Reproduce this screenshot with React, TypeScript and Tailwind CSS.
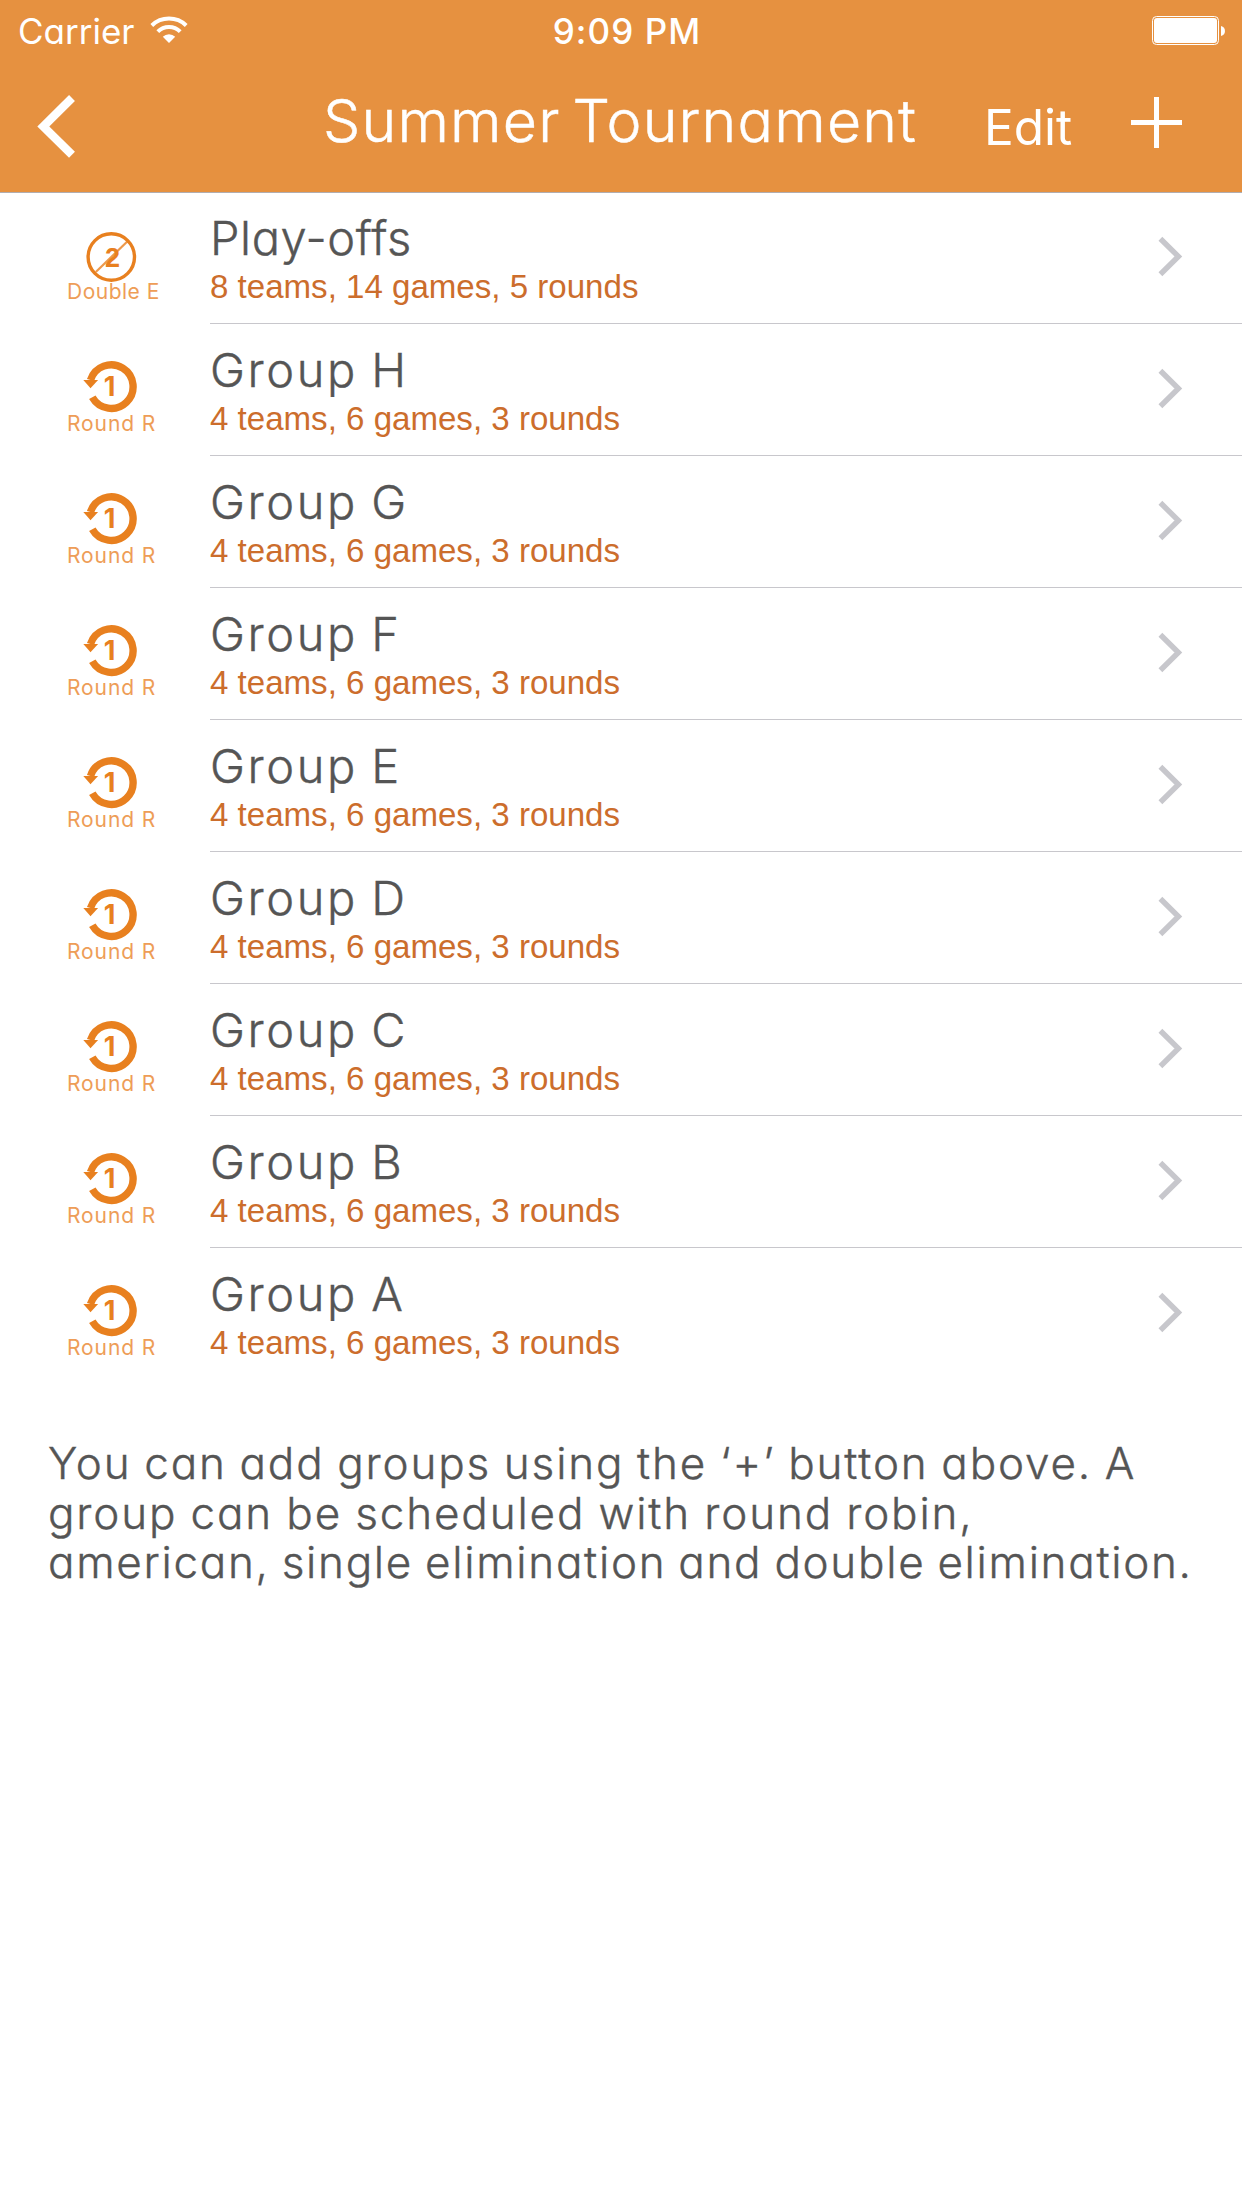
import React from "react";

type Format = "double" | "round";

interface Group {
  name: string;
  detail: string;
  format: Format;
}

const groups: Group[] = [
  { name: "Play-offs", detail: "8 teams, 14 games, 5 rounds", format: "double" },
  ...["H", "G", "F", "E", "D", "C", "B", "A"].map((letter) => ({
    name: `Group ${letter}`,
    detail: "4 teams, 6 games, 3 rounds",
    format: "round" as Format,
  })),
];

function WifiIcon() {
  return (
    <svg className="h-[28px] w-[38px] shrink-0" viewBox="0 0 38 28" fill="none" stroke="#fff" strokeWidth="4">
      <path d="M1.8 9.5A24.8 24.8 0 0 1 36.2 9.5" />
      <path d="M7.8 15.6A16 16 0 0 1 30.2 15.6" />
      <path d="M19 27L12.8 20.8A8.8 8.8 0 0 1 25.2 20.8Z" fill="#fff" stroke="none" />
    </svg>
  );
}

function BatteryIcon() {
  return (
    <svg className="h-[29px] w-[73px] shrink-0" viewBox="0 0 73 29">
      <rect x="0.5" y="0.5" width="66" height="28" rx="4" fill="none" stroke="#fff" />
      <rect x="2" y="2" width="63" height="25" rx="3" fill="#fff" />
      <path d="M69 10C74.3 11 74.3 19 69 20Z" fill="#fff" />
    </svg>
  );
}

function DoubleEliminationIcon() {
  return (
    <svg className="h-[56px] w-[56px]" viewBox="0 0 56 56">
      <g transform="translate(28.3 29)" fill="none" stroke="#e8801f">
        <circle r="23.2" strokeWidth="3.4" />
        <path d="M-15.5 15L16 -15.5" strokeWidth="2.2" strokeOpacity="0.8" />
        <text
          x="1.2"
          y="10.2"
          textAnchor="middle"
          fill="#e8801f"
          stroke="none"
          className="font-['Liberation_Sans',sans-serif] text-[27px] font-bold"
        >
          2
        </text>
      </g>
    </svg>
  );
}

function RoundRobinIcon() {
  return (
    <svg className="h-[56px] w-[56px]" viewBox="0 0 56 56">
      <g transform="translate(28.3 26.5)">
        <path d="M-20.8 -6.5A21.8 21.8 0 1 1 -19 10.8" fill="none" stroke="#e8801f" strokeWidth="7.4" />
        <path d="M-28 -6.4H-13.2L-20.8 1.8Z" fill="#e8801f" />
        <text
          x="-1.8"
          y="9.7"
          textAnchor="middle"
          fill="#e8801f"
          className="font-['Inter',sans-serif] text-[27px] font-bold"
        >
          1
        </text>
      </g>
    </svg>
  );
}

function GroupRow({ group, last }: { group: Group; last: boolean }) {
  const isDouble = group.format === "double";
  return (
    <li className="flex h-[132px]">
      <div className="w-[210px] shrink-0 pt-[36px]">
        <div className="pl-[83px]">{isDouble ? <DoubleEliminationIcon /> : <RoundRobinIcon />}</div>
        <div
          className={`-mt-[4px] pl-[67px] text-[21px] leading-[24px] whitespace-nowrap text-[#ee9d57] ${
            isDouble ? "tracking-[0.5px]" : "tracking-[0.9px]"
          }`}
        >
          {isDouble ? "Double E" : "Round R"}
        </div>
      </div>
      <div className={`flex grow justify-between pt-[18px] ${last ? "" : "border-b border-[#c8c7cc]"}`}>
        <div>
          <div
            className={`text-[47px] leading-[56px] font-light whitespace-nowrap text-[#555] [-webkit-text-stroke:0.4px_#555] ${
              isDouble ? "tracking-[0.6px]" : "tracking-[2.6px] [word-spacing:-2.5px]"
            }`}
          >
            {group.name}
          </div>
          <div className="pt-px font-['Liberation_Sans',Arial,sans-serif] text-[33.1px] leading-[40px] text-[#cc6d2c]">
            {group.detail}
          </div>
        </div>
        <svg
          className="mt-[25px] mr-[58px] h-[43px] w-[26px]"
          viewBox="0 0 26 43"
          fill="none"
          stroke="#c7c7cc"
          strokeWidth="5.4"
        >
          <path d="M2.4 3.8L20.4 21.5L2.4 39.2" />
        </svg>
      </div>
    </li>
  );
}

export default function App() {
  return (
    <div className="min-h-[2208px] w-[1242px] bg-white font-['Inter',sans-serif] [font-feature-settings:'cv11']">
      <header className="relative z-10 -mb-px h-[193px] border-b border-[#b1adb0] bg-[#e69140] text-white">
        <div className="grid h-[62px] grid-cols-[1fr_auto_1fr] items-center pr-[17px] pl-[18px] text-[35px]">
          <div className="flex items-center gap-[15px]">
            <span>Carrier</span>
            <span className="-mt-[3px]">
              <WifiIcon />
            </span>
          </div>
          <span className="pl-[11px] font-medium tracking-[1.1px]">9:09 PM</span>
          <span className="-mt-px flex justify-end">
            <BatteryIcon />
          </span>
        </div>
        <nav className="flex h-[130px] items-center">
          <svg className="ml-[34px] h-[70px] w-[46px]" viewBox="0 0 46 70" fill="none" stroke="#fff" strokeWidth="8.4">
            <path d="M38 6L9.3 34.4L38 62.8" />
          </svg>
          <h1 className="ml-[243px] w-[661px] pb-[12px] text-[59px] font-light tracking-[1.2px] [word-spacing:-6px] whitespace-nowrap [-webkit-text-stroke:0.5px_#fff]">
            Summer Tournament
          </h1>
          <span className="w-[147px] text-[49.5px]">Edit</span>
          <svg className="mb-[9px] h-[51px] w-[51px]" viewBox="0 0 51 51" fill="#fff">
            <rect x="0" y="23" width="51" height="5" />
            <rect x="23" y="0" width="5" height="51" />
          </svg>
        </nav>
      </header>
      <ul>
        {groups.map((group, i) => (
          <GroupRow key={group.name} group={group} last={i === groups.length - 1} />
        ))}
      </ul>
      <p className="mt-[59px] pl-[48px] text-[44px] leading-[49.5px] font-light whitespace-nowrap text-[#555] [-webkit-text-stroke:0.4px_#555]">
        <span className="block tracking-[1.85px] [word-spacing:-1.5px]">
          You can add groups using the ‘+’ button above. A
        </span>
        <span className="block tracking-[1.85px] [word-spacing:-1px]">group can be scheduled with round robin,</span>
        <span className="block tracking-[1.7px] [word-spacing:-2px]">
          american, single elimination and double elimination.
        </span>
      </p>
    </div>
  );
}
